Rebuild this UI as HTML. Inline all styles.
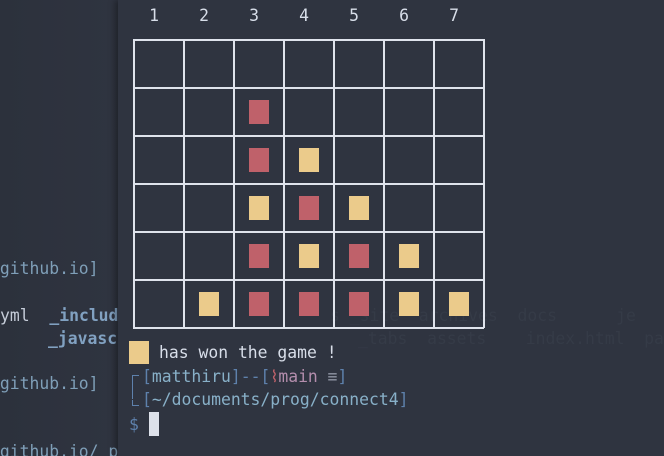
<!DOCTYPE html>
<html><head><style>
html,body{margin:0;padding:0;width:664px;height:456px;overflow:hidden;background:#2b303b;}
body{position:relative;font-family:"DejaVu Sans Mono","Liberation Mono",monospace;font-size:16.4px;}
.t{position:absolute;white-space:pre;line-height:20px;}
.n{position:absolute;top:6px;width:20px;text-align:center;line-height:20px;color:#d8dee9;}
#left{position:absolute;left:0;top:0;width:118px;height:456px;background:linear-gradient(90deg,#2c313c,#2f3440);}
#term{position:absolute;left:118px;top:0;width:546px;height:456px;background:#2f3440;box-shadow:-3px 0 6px rgba(0,0,0,0.35);}
.h{position:absolute;left:133px;width:351px;height:1.5px;background:#dfe3ec;}
.v{position:absolute;top:39px;height:289px;width:1.5px;background:#dfe3ec;}
.p{position:absolute;width:20px;height:24px;}
.r{background:#bf616a;}.y{background:#ebcb8b;}
</style></head><body>
<div id="left"></div>
<div class="t" style="left:-10px;top:259px;color:#7f9fb8">.github.io]</div>
<div class="t" style="left:0px;top:306px;color:#c5ccd8">yml  <b style="color:#81a1c1">_includes</b></div>
<div class="t" style="left:48px;top:329px;color:#81a1c1;font-weight:bold">_javascript</div>
<div class="t" style="left:-10px;top:374px;color:#7f9fb8">.github.io]</div>
<div class="t" style="left:-10px;top:442px;color:#7f9fb8">.github.io/_posts]</div>
<div id="term"></div>
<div class="t" style="left:330px;top:306px;color:#353b47">s _site  archives  docs      je</div>
<div class="t" style="left:358px;top:329px;color:#353b47">_tabs  assets    index.html  pa</div>
<div class="n" style="left:144px">1</div><div class="n" style="left:194px">2</div><div class="n" style="left:244px">3</div><div class="n" style="left:294px">4</div><div class="n" style="left:344px">5</div><div class="n" style="left:394px">6</div><div class="n" style="left:444px">7</div>
<div class="h" style="top:39px"></div><div class="h" style="top:87px"></div><div class="h" style="top:135px"></div><div class="h" style="top:183px"></div><div class="h" style="top:231px"></div><div class="h" style="top:279px"></div><div class="h" style="top:327px"></div>
<div class="v" style="left:133px"></div><div class="v" style="left:183px"></div><div class="v" style="left:233px"></div><div class="v" style="left:283px"></div><div class="v" style="left:333px"></div><div class="v" style="left:383px"></div><div class="v" style="left:433px"></div><div class="v" style="left:483px"></div>
<div class="p r" style="left:249px;top:100px"></div>
<div class="p r" style="left:249px;top:148px"></div><div class="p y" style="left:299px;top:148px"></div>
<div class="p y" style="left:249px;top:196px"></div><div class="p r" style="left:299px;top:196px"></div><div class="p y" style="left:349px;top:196px"></div>
<div class="p r" style="left:249px;top:244px"></div><div class="p y" style="left:299px;top:244px"></div><div class="p r" style="left:349px;top:244px"></div><div class="p y" style="left:399px;top:244px"></div>
<div class="p y" style="left:199px;top:292px"></div><div class="p r" style="left:249px;top:292px"></div><div class="p r" style="left:299px;top:292px"></div><div class="p r" style="left:349px;top:292px"></div><div class="p y" style="left:399px;top:292px"></div><div class="p y" style="left:449px;top:292px"></div>
<div class="p y" style="left:129px;top:341px;width:20px;height:23px"></div>
<div class="t" style="left:159px;top:343px;color:#d8dee9">has won the game !</div>
<div style="position:absolute;left:132px;top:375px;width:6px;height:23px;border-left:1.5px solid #5e81ac;border-top:1.5px solid #5e81ac;"></div>
<div style="position:absolute;left:132px;top:400px;width:6px;height:5px;border-left:1.5px solid #5e81ac;border-bottom:1.5px solid #5e81ac;"></div>
<div class="t" style="left:142px;top:367px;color:#5e81ac">[<span style="color:#88b0c8">matthiru</span>]--[<span style="color:#bf616a">⌇</span><span style="color:#b48ead">main </span><span style="color:#8f95a3">≡</span>]</div>
<div class="t" style="left:142px;top:390px;color:#5e81ac">[<span style="color:#88b0c8">~/documents/prog/connect4</span>]</div>
<div class="t" style="left:129px;top:415px;color:#5e81ac">$</div>
<div style="position:absolute;left:149px;top:412px;width:10px;height:24px;background:#dde1ea"></div>
</body></html>
